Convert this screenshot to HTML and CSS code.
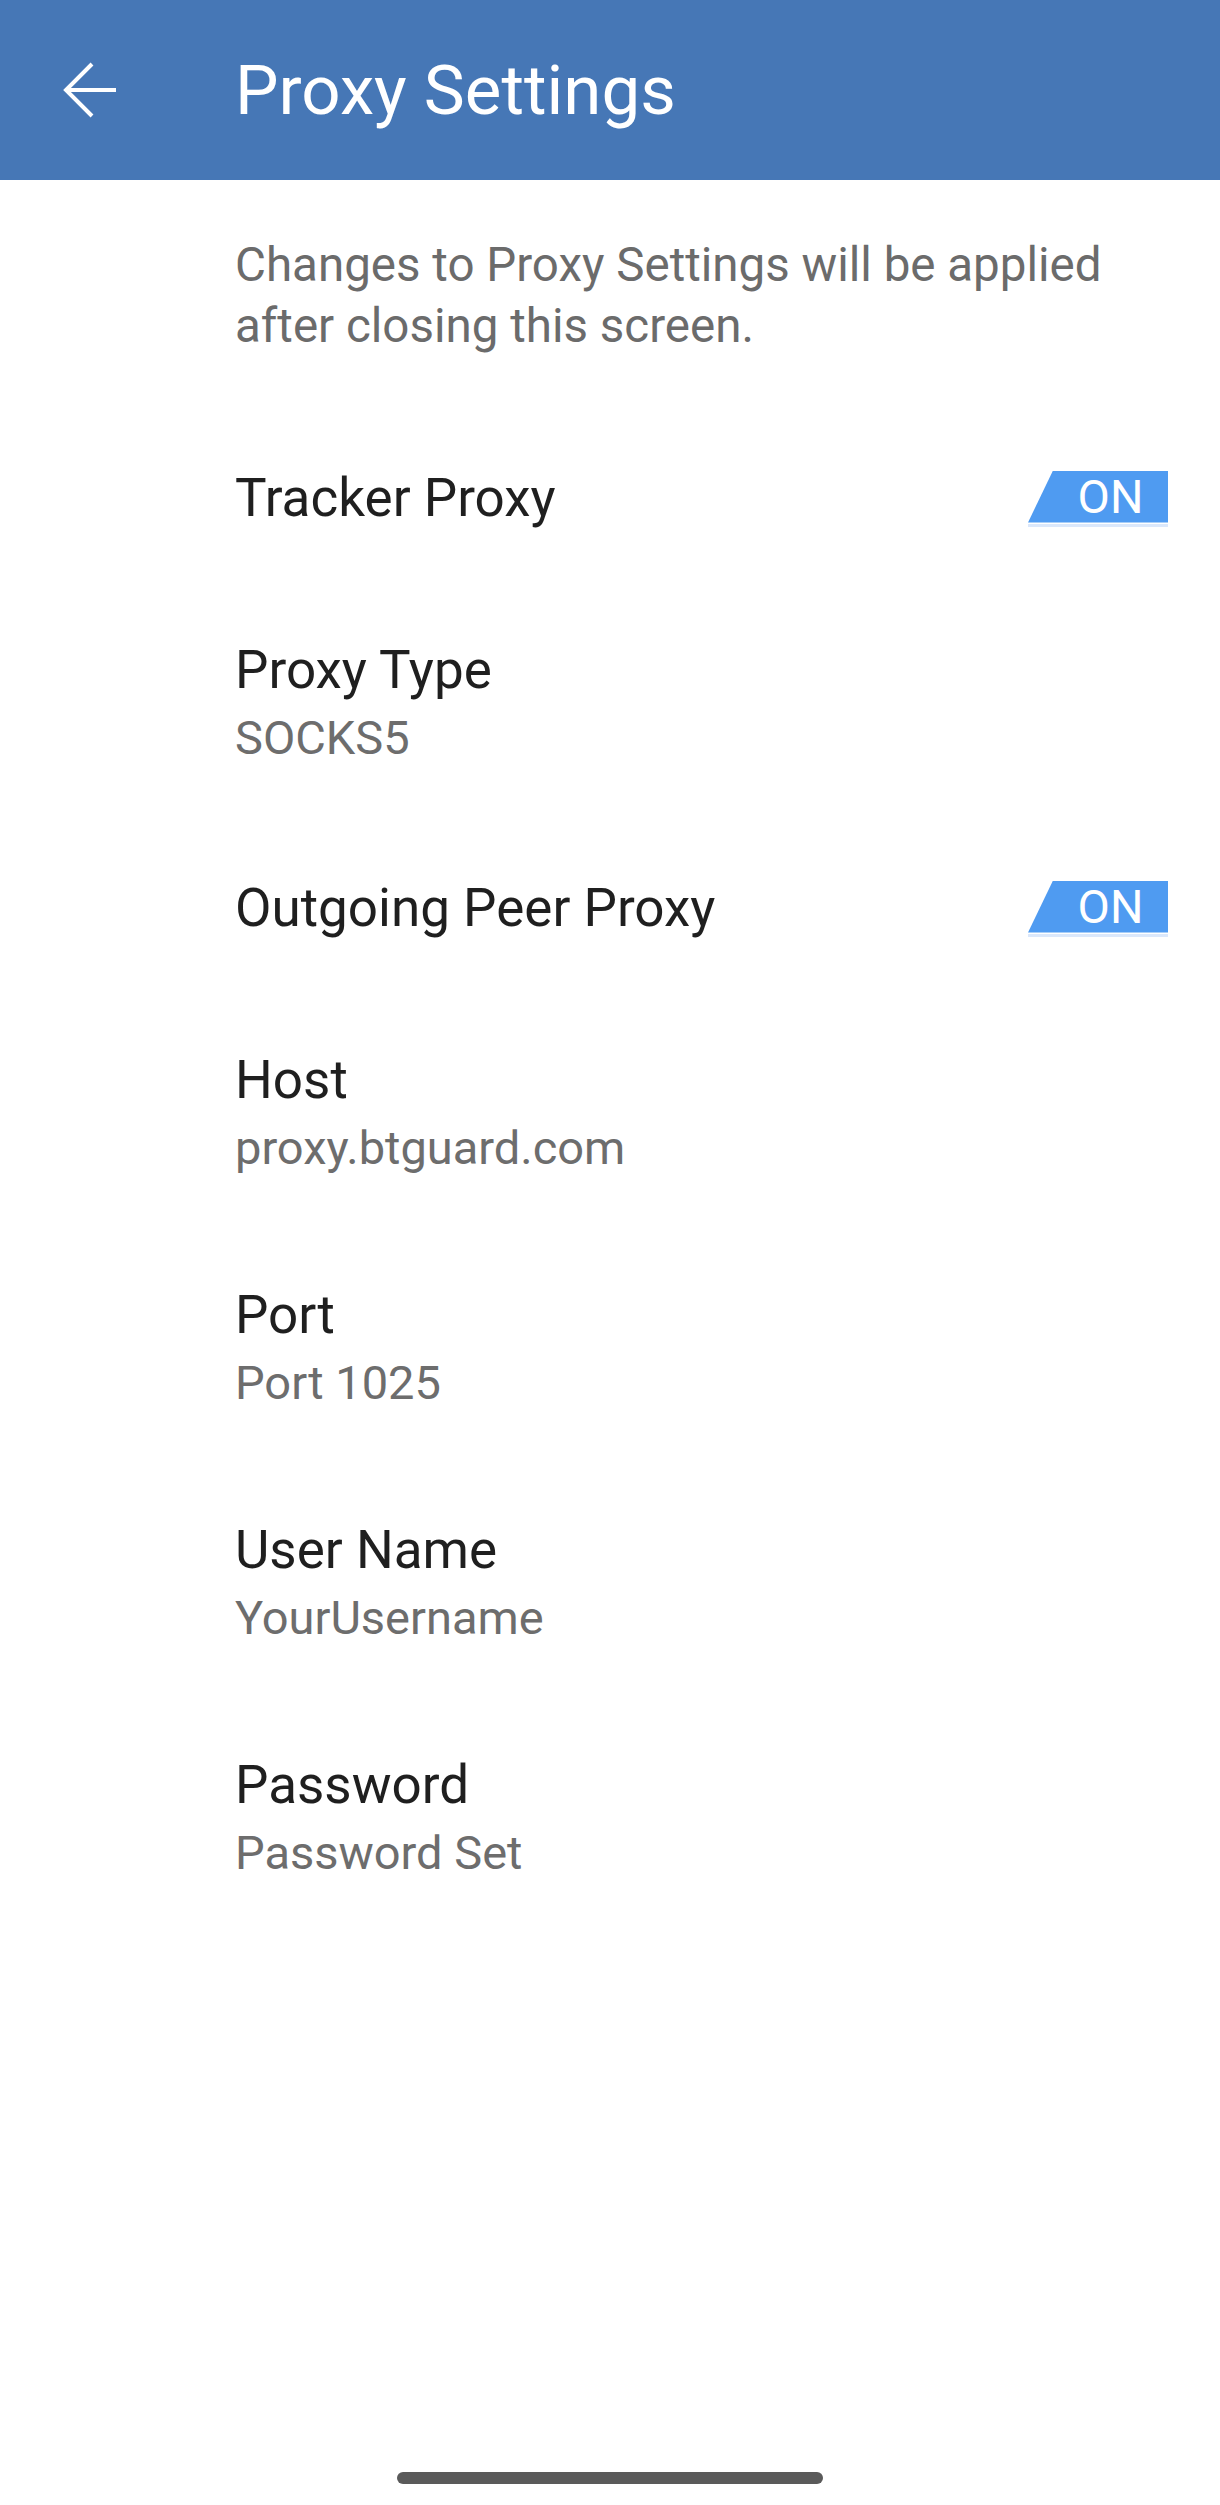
FILE: index.html
```html
<!DOCTYPE html>
<html lang="en">
<head>
<meta charset="utf-8">
<title>Proxy Settings</title>
<link rel="stylesheet" href="styles.css">
</head>
<body>
<div class="screen">
  <header class="appbar">
    <button class="back" aria-label="Back">
      <svg width="56" height="56" viewBox="0 0 56 56" fill="none" stroke="#ffffff" stroke-width="4" stroke-linecap="butt" stroke-linejoin="miter">
        <path d="M54 28H4"/>
        <path d="M30 2L4 28L30 54"/>
      </svg>
    </button>
    <h1 class="title">Proxy Settings</h1>
  </header>

  <main class="content">
    <p class="note">Changes to Proxy Settings will be applied after closing this screen.</p>

    <div class="row single">
      <div class="text"><div class="label">Tracker Proxy</div></div>
      <div class="toggle"><span>ON</span></div>
    </div>

    <div class="row double">
      <div class="text"><div class="label">Proxy Type</div><div class="value">SOCKS5</div></div>
    </div>

    <div class="row single">
      <div class="text"><div class="label">Outgoing Peer Proxy</div></div>
      <div class="toggle"><span>ON</span></div>
    </div>

    <div class="row double">
      <div class="text"><div class="label">Host</div><div class="value">proxy.btguard.com</div></div>
    </div>

    <div class="row double">
      <div class="text"><div class="label">Port</div><div class="value">Port 1025</div></div>
    </div>

    <div class="row double">
      <div class="text"><div class="label">User Name</div><div class="value">YourUsername</div></div>
    </div>

    <div class="row double">
      <div class="text"><div class="label">Password</div><div class="value">Password Set</div></div>
    </div>
  </main>

  <div class="homebar"></div>
</div>
</body>
</html>
```
FILE: styles.css
```css
* { box-sizing: border-box; }
html, body { margin: 0; padding: 0; background: #ffffff; }
body { font-family: Roboto, "Noto Sans", sans-serif; }

.screen {
  width: 1220px;
  height: 2505px;
  display: flex;
  flex-direction: column;
  background: #ffffff;
}

.appbar {
  height: 180px;
  background: #4677b6;
  display: flex;
  align-items: center;
  flex-shrink: 0;
}

.back {
  margin-left: 62px;
  width: 56px;
  height: 56px;
  padding: 0;
  border: 0;
  background: transparent;
  display: flex;
  align-items: center;
  justify-content: center;
}

.title {
  margin: 0 0 0 117px;
  color: #ffffff;
  font-weight: 400;
  font-size: 69px;
  line-height: 1;
  letter-spacing: 0;
}

.content {
  padding: 0 52px 0 235px;
  flex: 1;
}

.note {
  margin: 0;
  max-width: 900px;
  padding: 55px 0 54px;
  color: #6b6b6b;
  font-size: 47.5px;
  line-height: 61px;
}

.row {
  display: flex;
  align-items: center;
  justify-content: space-between;
}

.row.single { height: 175px; }
.row.double { height: 235px; }

.label {
  color: #1f1f1f;
  font-size: 53px;
  line-height: 67px;
}

.value {
  color: #6d6d6d;
  font-size: 47px;
  line-height: 67px;
}

.toggle {
  width: 140px;
  height: 56px;
  display: flex;
  flex-direction: column;
}

.toggle span {
  height: 52px;
  background: #4f9bf1;
  clip-path: polygon(25px 0, 100% 0, 100% 100%, 0 100%);
  color: #ffffff;
  font-size: 47px;
  line-height: 52px;
  padding-left: 25px;
  text-align: center;
}

.toggle::after {
  content: "";
  display: block;
  height: 3px;
  margin-top: 1px;
  background: #dbe8fb;
}

.homebar {
  width: 426px;
  height: 12px;
  border-radius: 6px;
  background: #5a5a5a;
  align-self: center;
  margin-bottom: 21px;
  flex-shrink: 0;
}
```
